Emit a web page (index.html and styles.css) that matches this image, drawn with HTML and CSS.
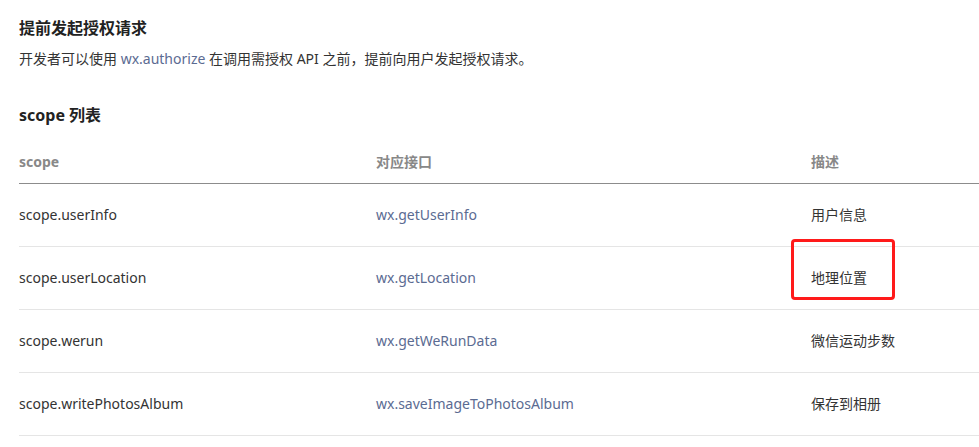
FILE: index.html
```html
<!DOCTYPE html>
<html lang="zh-CN">
<head>
    <meta charset="UTF-8">
    <meta name="viewport" content="width=device-width, initial-scale=1.0">
    <title>提前发起授权请求</title>
    <link rel="stylesheet" href="styles.css">
</head>
<body>
    <div class="page">
        <h2 class="title">提前发起授权请求</h2>
        <p class="intro">开发者可以使用 <a href="#">wx.authorize</a> 在调用需授权 API 之前，提前向用户发起授权请求。</p>

        <h3 class="subtitle">scope 列表</h3>
        <table class="scope-table">
            <thead>
                <tr>
                    <th class="col-scope">scope</th>
                    <th class="col-api">对应接口</th>
                    <th class="col-desc">描述</th>
                </tr>
            </thead>
            <tbody>
                <tr>
                    <td>scope.userInfo</td>
                    <td><a href="#">wx.getUserInfo</a></td>
                    <td>用户信息</td>
                </tr>
                <tr>
                    <td>scope.userLocation</td>
                    <td><a href="#">wx.getLocation</a></td>
                    <td class="marked">地理位置<span class="mark-box"></span></td>
                </tr>
                <tr>
                    <td>scope.werun</td>
                    <td><a href="#">wx.getWeRunData</a></td>
                    <td>微信运动步数</td>
                </tr>
                <tr>
                    <td>scope.writePhotosAlbum</td>
                    <td><a href="#">wx.saveImageToPhotosAlbum</a></td>
                    <td>保存到相册</td>
                </tr>
            </tbody>
        </table>
    </div>
</body>
</html>
```

FILE: styles.css
```css
body {
    margin: 0;
    padding: 0;
    background-color: #ffffff;
    color: #333333;
    font-family: "Noto Sans", "Noto Sans CJK SC", sans-serif;
    font-size: 14px;
    overflow: hidden;
}

.page {
    padding: 16px 0 0 19px;
}

a {
    color: #5b6b92;
    text-decoration: none;
}

.title {
    margin: 0;
    font-size: 16px;
    line-height: 24px;
    font-weight: bold;
    color: #222222;
}

.intro {
    margin: 8px 0 0;
    line-height: 22px;
}

.subtitle {
    margin: 33px 0 0;
    font-size: 16px;
    line-height: 24px;
    font-weight: bold;
    color: #222222;
}

.scope-table {
    margin-top: 24px;
    width: 960px;
    border-collapse: collapse;
    table-layout: fixed;
}

.col-scope {
    width: 357px;
}

.col-api {
    width: 435px;
}

th, td {
    padding: 0;
    text-align: left;
    line-height: 22px;
}

th {
    padding-bottom: 10px;
    color: #888888;
    font-weight: bold;
    border-bottom: 1px solid #8c8c8c;
}

td {
    padding: 20px 0;
    border-bottom: 1px solid #e5e5e5;
}

.marked {
    position: relative;
}

.mark-box {
    position: absolute;
    left: -20px;
    top: -8px;
    width: 98px;
    height: 55px;
    border: 3px solid #ff1a1a;
    border-radius: 4px;
}
```
